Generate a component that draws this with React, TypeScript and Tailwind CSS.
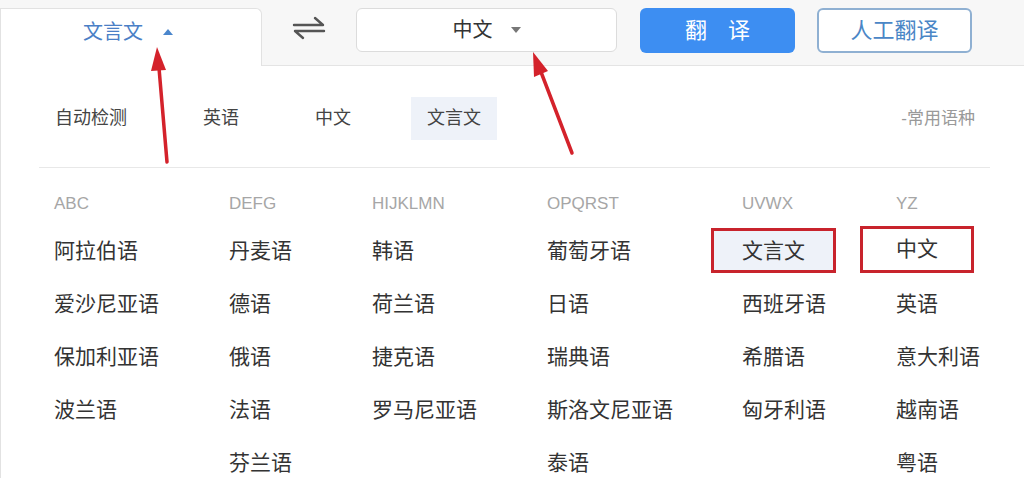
import React from "react";

type Item = { name: string; mark?: "active" | "boxed" };

const common = ["自动检测", "英语", "中文", "文言文"];

const groups: { title: string; items: Item[] }[] = [
  {
    title: "ABC",
    items: [{ name: "阿拉伯语" }, { name: "爱沙尼亚语" }, { name: "保加利亚语" }, { name: "波兰语" }],
  },
  {
    title: "DEFG",
    items: [{ name: "丹麦语" }, { name: "德语" }, { name: "俄语" }, { name: "法语" }, { name: "芬兰语" }],
  },
  {
    title: "HIJKLMN",
    items: [{ name: "韩语" }, { name: "荷兰语" }, { name: "捷克语" }, { name: "罗马尼亚语" }],
  },
  {
    title: "OPQRST",
    items: [{ name: "葡萄牙语" }, { name: "日语" }, { name: "瑞典语" }, { name: "斯洛文尼亚语" }, { name: "泰语" }],
  },
  {
    title: "UVWX",
    items: [{ name: "文言文", mark: "active" }, { name: "西班牙语" }, { name: "希腊语" }, { name: "匈牙利语" }],
  },
  {
    title: "YZ",
    items: [{ name: "中文", mark: "boxed" }, { name: "英语" }, { name: "意大利语" }, { name: "越南语" }, { name: "粤语" }],
  },
];

const SwapIcon = () => (
  <svg width="34" height="24" viewBox="0 0 34 24" fill="none" stroke="#555" strokeWidth="2.4" strokeLinecap="round" strokeLinejoin="round">
    <path d="M2 9 H31 L23 2" />
    <path d="M32 15 H3 L11 22" />
  </svg>
);

const LangItem = ({ item }: { item: Item }) => {
  if (item.mark === "active") {
    return (
      <span className="-ml-[28px] inline-flex h-[39px] items-center bg-[#eef2f9] px-[28px] outline-[3px] outline-solid outline-[#c8232c]">
        {item.name}
      </span>
    );
  }
  if (item.mark === "boxed") {
    return (
      <span className="-ml-[33px] -mt-[3px] inline-flex h-[41px] items-center px-[33px] outline-[3px] outline-solid outline-[#c8232c]">
        {item.name}
      </span>
    );
  }
  return <span>{item.name}</span>;
};

export default function App() {
  return (
    <div className="relative h-[478px] w-[1024px] overflow-hidden bg-white font-['Liberation_Sans','Noto_Sans_CJK_SC',sans-serif]">
      {/* top bar */}
      <div className="flex h-[66px] bg-[#f7f7f7]">
        <div className="mt-[8px] flex w-[262px] items-start justify-center rounded-tr-[6px] border-r border-t border-l border-[#e2e2e2] bg-white pl-[2px] pt-[8px]">
          <span className="-ml-[8px] text-[20px] leading-[30px] text-[#4a7fc6]">文言文</span>
          <span className="ml-[20px] mt-[12px] h-0 w-0 border-x-[5px] border-b-[6px] border-x-transparent border-b-[#4a86cc]" />
        </div>
        <div className="flex flex-1 items-start border-b border-[#e4e4e4] pt-[8px]">
          <div className="ml-[30px] mt-[8px]">
            <SwapIcon />
          </div>
          <div className="ml-[30px] flex h-[44px] w-[261px] items-center justify-center rounded-[6px] border border-[#dcdcdc] bg-white">
            <span className="text-[20px] text-[#333]">中文</span>
            <span className="ml-[18px] h-0 w-0 border-x-[5px] border-t-[6px] border-x-transparent border-t-[#777]" />
          </div>
          <button className="ml-[23px] flex h-[45px] w-[155px] items-center justify-center gap-[21px] rounded-[6px] bg-[#3d8ef2] text-[22px] text-white">
            <span>翻</span>
            <span>译</span>
          </button>
          <button className="ml-[22px] flex h-[45px] w-[155px] items-center justify-center rounded-[6px] border-2 border-[#8fb0d2] bg-white text-[22px] text-[#4a86c6]">
            人工翻译
          </button>
        </div>
      </div>

      {/* language dropdown */}
      <div className="h-[412px] border-l border-[#e2e2e2] bg-white pl-[38px] pr-[34px] pt-[31px]">
        <div className="flex h-[43px] items-center text-[18px] text-[#444]">
          <div className="flex gap-[44px]">
            {common.map((name) => (
              <span
                key={name}
                className={
                  name === "文言文"
                    ? "flex h-[43px] items-center bg-[#eef2f9] px-[16px]"
                    : "flex h-[43px] items-center px-[16px]"
                }
              >
                {name}
              </span>
            ))}
          </div>
          <span className="ml-auto pr-[15px] text-[17px] text-[#999]">-常用语种</span>
        </div>
        <div className="mt-[27px] h-px bg-[#e8e8e8]" />
        <div className="mt-[15px] grid grid-cols-[175px_143px_175px_195px_154px_1fr] pl-[15px]">
          {groups.map((g) => (
            <div key={g.title} className="flex flex-col">
              <div className="flex h-[41px] items-center text-[17px] text-[#a6a6a6]">{g.title}</div>
              {g.items.map((item) => (
                <div key={item.name} className="flex h-[53px] items-center text-[21px] text-[#333]">
                  <LangItem item={item} />
                </div>
              ))}
            </div>
          ))}
        </div>
      </div>

      {/* red annotation arrows */}
      <svg className="pointer-events-none absolute inset-0" width="1024" height="478">
        <line x1="167" y1="162" x2="159" y2="68" stroke="#d4222b" strokeWidth="3.5" strokeLinecap="round" />
        <polygon points="157,47 166,70 151,71" fill="#d4222b" />
        <line x1="572" y1="153" x2="541" y2="72" stroke="#d4222b" strokeWidth="3.5" strokeLinecap="round" />
        <polygon points="533,52 548,71 534,77" fill="#d4222b" />
      </svg>
    </div>
  );
}
